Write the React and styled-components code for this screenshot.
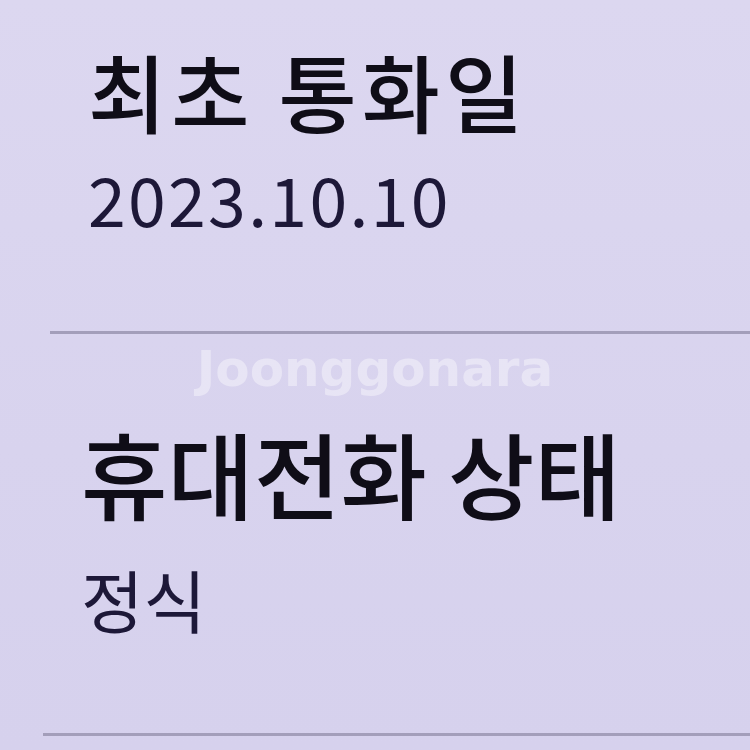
import styled, { createGlobalStyle } from "styled-components"

const Global = createGlobalStyle`
  html, body { margin: 0; padding: 0; }
  body {
    background: #d9d4ef;
    font-family: "Noto Sans CJK KR", "Noto Sans", sans-serif;
    width: 750px;
    height: 750px;
    overflow: hidden;
  }
`

const Screen = styled.div`
  position: relative;
  width: 750px;
  height: 750px;
  padding-top: 47px;
  box-sizing: border-box;
  background: linear-gradient(180deg, #dcd7f0 0%, #d8d3ee 60%, #d6d1ed 100%);
`

const Item = styled.section`
  margin-top: ${(p) => p.$top || 0}px;
  padding-left: ${(p) => p.$indent}px;
  display: flex;
  flex-direction: column;
`

const Label = styled.h2`
  margin: 0;
  font-size: ${(p) => p.$size}px;
  line-height: 1;
  font-weight: 500;
  color: #0f0d17;
  letter-spacing: ${(p) => p.$spacing || 0}px;
`

const Value = styled.div`
  margin-top: ${(p) => p.$gap}px;
  font-size: ${(p) => p.$size}px;
  line-height: 1;
  font-weight: 400;
  color: #1d1838;
  letter-spacing: ${(p) => p.$spacing || 0}px;
`

const Divider = styled.hr`
  margin: ${(p) => p.$top}px 0 0 ${(p) => p.$left}px;
  border: none;
  height: 3px;
  background: #a39eba;
`

const Watermark = styled.div`
  position: absolute;
  left: 0;
  right: 0;
  top: 344px;
  text-align: center;
  font-family: "DejaVu Sans", "Noto Sans", sans-serif;
  font-weight: 700;
  font-size: 50px;
  line-height: 1;
  color: rgba(255, 255, 255, 0.4);
  pointer-events: none;
`

export default function App() {
  return (
    <>
      <Global />
      <Screen>
        <Item $indent={88}>
          <Label $size={85} $spacing={5}>최초 통화일</Label>
          <Value $size={68} $gap={32} $spacing={2.3}>2023.10.10</Value>
        </Item>
        <Divider $top={99} $left={50} />
        <Item $indent={81} $top={91}>
          <Label $size={94}>휴대전화 상태</Label>
          <Value $size={68} $gap={46}>정식</Value>
        </Item>
        <Divider $top={100} $left={43} />
        <Watermark>Joonggonara</Watermark>
      </Screen>
    </>
  )
}
